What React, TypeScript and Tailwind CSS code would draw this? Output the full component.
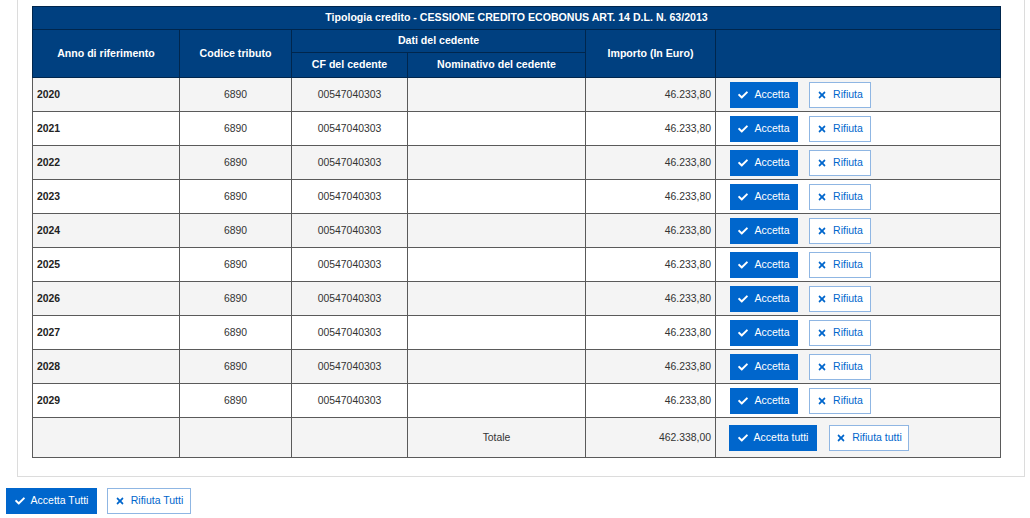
import { FaCheck, FaTimes } from "react-icons/fa";

const years = [2020, 2021, 2022, 2023, 2024, 2025, 2026, 2027, 2028, 2029];

function AcceptButton({ label, width }: { label: string; width: string }) {
  return (
    <button
      type="button"
      className={`flex h-[26px] ${width} items-center justify-center gap-[6px] bg-[#0066cc] text-[10.5px] text-white`}
    >
      <FaCheck className="h-[10px] w-[10px]" />
      {label}
    </button>
  );
}

function RejectButton({ label, width }: { label: string; width: string }) {
  return (
    <button
      type="button"
      className={`flex h-[26px] ${width} items-center justify-center gap-[6px] border border-[#8fb6e3] bg-white text-[10.5px] text-[#0066cc]`}
    >
      <FaTimes className="h-[10px] w-[10px]" />
      {label}
    </button>
  );
}

export default function App() {
  return (
    <div className="h-[518px] w-[1030px] bg-white font-['Liberation_Sans',Arial,sans-serif] text-[10.4px] text-[#333]">
      <div className="ml-[17px] w-[1008px] border-x border-b border-[#dcdcdc] pb-[18px] pl-[14px] pt-[6px]">
        <table className="w-[968px] table-fixed border-collapse">
          <colgroup>
            <col className="w-[147px]" />
            <col className="w-[112px]" />
            <col className="w-[116px]" />
            <col className="w-[178px]" />
            <col className="w-[130px]" />
            <col className="w-[285px]" />
          </colgroup>
          <thead className="bg-[#004080] text-[10.6px] font-bold text-white">
            <tr className="h-[23px]">
              <th colSpan={6} className="border border-[#00264d] text-center">
                Tipologia credito - CESSIONE CREDITO ECOBONUS ART. 14 D.L. N. 63/2013
              </th>
            </tr>
            <tr className="h-[23px]">
              <th rowSpan={2} className="border border-[#00264d]">
                Anno di riferimento
              </th>
              <th rowSpan={2} className="border border-[#00264d]">
                Codice tributo
              </th>
              <th colSpan={2} className="border border-[#00264d]">
                Dati del cedente
              </th>
              <th rowSpan={2} className="border border-[#00264d]">
                Importo (In Euro)
              </th>
              <th rowSpan={2} className="border border-[#00264d]"></th>
            </tr>
            <tr className="h-[25px]">
              <th className="border border-[#00264d]">CF del cedente</th>
              <th className="border border-[#00264d]">Nominativo del cedente</th>
            </tr>
          </thead>
          <tbody>
            {years.map((year, index) => (
              <tr key={year} className={`h-[34px] ${index % 2 === 0 ? "bg-[#f4f4f4]" : "bg-white"}`}>
                <td className="border border-[#5a5a5a] pl-[4px] font-bold text-[#222]">{year}</td>
                <td className="border border-[#5a5a5a] text-center">6890</td>
                <td className="border border-[#5a5a5a] text-center">00547040303</td>
                <td className="border border-[#5a5a5a]"></td>
                <td className="border border-[#5a5a5a] pr-[4px] text-right">46.233,80</td>
                <td className="border border-[#5a5a5a] pl-[14px]">
                  <div className="flex gap-[11px]">
                    <AcceptButton label="Accetta" width="w-[68px]" />
                    <RejectButton label="Rifiuta" width="w-[62px]" />
                  </div>
                </td>
              </tr>
            ))}
            <tr className="h-[40px] bg-[#f4f4f4]">
              <td className="border border-[#5a5a5a]"></td>
              <td className="border border-[#5a5a5a]"></td>
              <td className="border border-[#5a5a5a]"></td>
              <td className="border border-[#5a5a5a] text-center">Totale</td>
              <td className="border border-[#5a5a5a] pr-[4px] text-right">462.338,00</td>
              <td className="border border-[#5a5a5a] pl-[13px]">
                <div className="flex gap-[12px]">
                  <AcceptButton label="Accetta tutti" width="w-[88px]" />
                  <RejectButton label="Rifiuta tutti" width="w-[80px]" />
                </div>
              </td>
            </tr>
          </tbody>
        </table>
      </div>
      <div className="ml-[6px] mt-[11px] flex gap-[10px]">
        <AcceptButton label="Accetta Tutti" width="w-[91px]" />
        <RejectButton label="Rifiuta Tutti" width="w-[84px]" />
      </div>
    </div>
  );
}
